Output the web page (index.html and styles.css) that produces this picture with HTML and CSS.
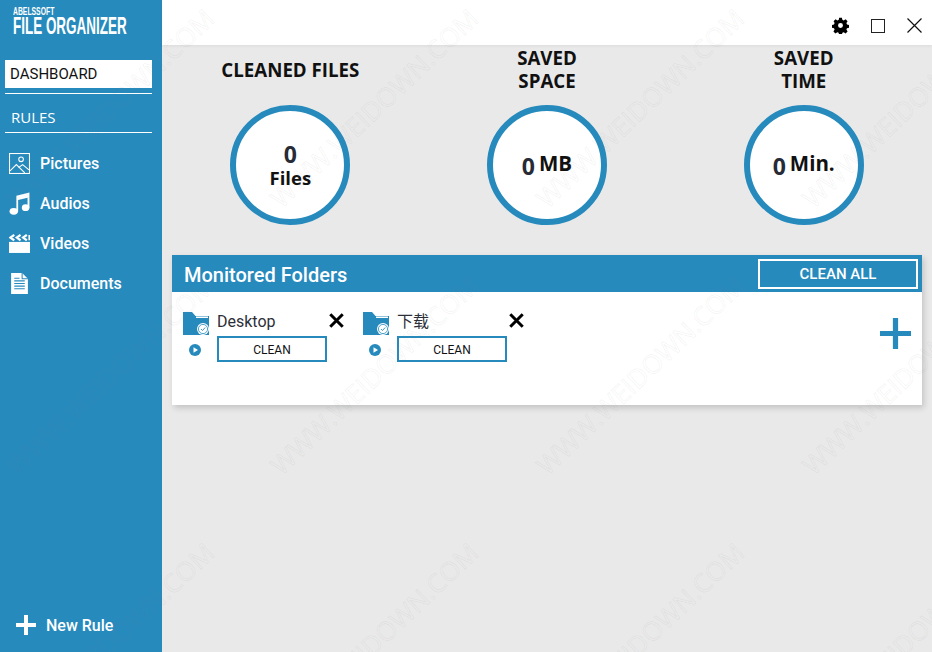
FILE: index.html
```html
<!DOCTYPE html>
<html lang="en">
<head>
<meta charset="utf-8">
<title>Abelssoft File Organizer</title>
<link rel="stylesheet" href="styles.css">
</head>
<body>
<div class="app">
  <aside class="sidebar">
    <div class="logo">
      <div class="logo-small">ABELSSOFT</div>
      <div class="logo-big">FILE ORGANIZER</div>
    </div>
    <div class="dash">DASHBOARD</div>
    <div class="rule-line"></div>
    <div class="rules">RULES</div>
    <nav class="nav">
      <div class="nav-item">
        <svg class="nav-icon" viewBox="0 0 20 20"><g fill="none" stroke="#fff" stroke-width="1"><rect x="0.5" y="0.5" width="19" height="19"/><circle cx="11.5" cy="6" r="2.2"/><path d="M1 17l6-6 8 8M9 14l4-3 6 5"/></g></svg>
        <span>Pictures</span>
      </div>
      <div class="nav-item">
        <svg class="nav-icon music" viewBox="0 0 20 22"><path fill="#fff" d="M7 3.500L19.500.5v15h-1.800V5.500L8.700 7.600V19H7z"/><ellipse fill="#fff" cx="4.500" cy="18.500" rx="4" ry="3.300"/><ellipse fill="#fff" cx="15.800" cy="15" rx="3.600" ry="3.200"/></svg>
        <span>Audios</span>
      </div>
      <div class="nav-item">
        <svg class="nav-icon" viewBox="0 0 20 18"><path fill="#fff" d="M0 7.500h20V18H0z"/><path fill="none" stroke="#fff" stroke-width="2.200" d="M5 .8L1.500 3.400 5 6M11 .8L7.500 3.400 11 6M17 .8l-3.500 2.600L17 6"/><path fill="#fff" d="M18.500 1H20v5h-1.500z"/></svg>
        <span>Videos</span>
      </div>
      <div class="nav-item">
        <svg class="nav-icon doc" viewBox="0 0 16 20"><path fill="#fff" d="M0 0h10.500L16 5.500V20H0z"/><path fill="none" stroke="#278abd" stroke-width="1" d="M3 7.500h10M3 10h10M3 12.500h10M3 15h10M3 5h5M10.500 0v5.500H16"/></svg>
        <span>Documents</span>
      </div>
    </nav>
    <div class="new-rule">
      <svg class="new-plus" viewBox="0 0 20 20"><path fill="#fff" d="M8 0h4v8h8v4h-8v8H8v-8H0V8h8z"/></svg>
      <span>New Rule</span>
    </div>
  </aside>
  <main class="main">
    <header class="topbar">
      <svg class="gear" viewBox="0 0 24 24"><path fill="#000" fill-rule="evenodd" d="M10 1h4l.6 3 2 .9 2.600-1.700 2.800 2.800-1.700 2.600.9 2 3 .6v4l-3 .6-.9 2 1.700 2.600-2.800 2.800-2.600-1.700-2 .9-.6 3h-4l-.6-3-2-.9-2.600 1.700-2.800-2.800 1.700-2.600-.9-2-3-.6v-4l3-.6.9-2L2.200 6 5 3.200l2.600 1.700 2-.9zM12 8.500a3.500 3.500 0 1 0 0 7 3.500 3.500 0 0 0 0-7z"/></svg>
      <span class="maxi"></span>
      <svg class="close" viewBox="0 0 15 15"><path fill="none" stroke="#111" stroke-width="1.200" d="M.5.500l14 14M14.500.500l-14 14"/></svg>
    </header>
    <section class="stats">
      <div class="stat">
        <h2 class="stat-title">CLEANED FILES</h2>
        <div class="ring stack"><b class="num">0</b><b class="unit">Files</b></div>
      </div>
      <div class="stat">
        <h2 class="stat-title">SAVED<br>SPACE</h2>
        <div class="ring"><b class="num">0</b><b class="unit">MB</b></div>
      </div>
      <div class="stat">
        <h2 class="stat-title">SAVED<br>TIME</h2>
        <div class="ring"><b class="num">0</b><b class="unit">Min.</b></div>
      </div>
    </section>
    <section class="panel">
      <div class="panel-head">
        <h1 class="panel-title">Monitored Folders</h1>
        <div class="clean-all">CLEAN ALL</div>
      </div>
      <div class="panel-body">
        <div class="folder">
          <div class="folder-left">
            <svg class="folder-icon" viewBox="0 0 26 23"><path fill="#278abd" d="M0 0h9l3.500 4H26v19H0z"/><path fill="#fff" d="M13 4.500h12v1.500H13z"/><circle cx="20" cy="17" r="6" fill="#fff"/><circle cx="20" cy="17" r="4.600" fill="none" stroke="#278abd" stroke-width=".8"/><path fill="none" stroke="#278abd" stroke-width=".9" d="M18 17l1.500 1.500 2.700-3"/></svg>
            <svg class="play" viewBox="0 0 12 12"><circle cx="6" cy="6" r="6" fill="#278abd"/><path fill="#fff" d="M4.500 3.300L9 6l-4.500 2.700z"/></svg>
          </div>
          <div class="folder-mid">
            <div class="folder-name">Desktop</div>
            <div class="clean">CLEAN</div>
          </div>
          <svg class="remove" viewBox="0 0 14 14"><path fill="none" stroke="#000" stroke-width="2.800" d="M1.200 1.200l11.600 11.600M12.800 1.200L1.200 12.800"/></svg>
        </div>
        <div class="folder">
          <div class="folder-left">
            <svg class="folder-icon" viewBox="0 0 26 23"><path fill="#278abd" d="M0 0h9l3.500 4H26v19H0z"/><path fill="#fff" d="M13 4.500h12v1.500H13z"/><circle cx="20" cy="17" r="6" fill="#fff"/><circle cx="20" cy="17" r="4.600" fill="none" stroke="#278abd" stroke-width=".8"/><path fill="none" stroke="#278abd" stroke-width=".9" d="M18 17l1.500 1.500 2.700-3"/></svg>
            <svg class="play" viewBox="0 0 12 12"><circle cx="6" cy="6" r="6" fill="#278abd"/><path fill="#fff" d="M4.500 3.300L9 6l-4.500 2.700z"/></svg>
          </div>
          <div class="folder-mid">
            <div class="folder-name">下载</div>
            <div class="clean">CLEAN</div>
          </div>
          <svg class="remove" viewBox="0 0 14 14"><path fill="none" stroke="#000" stroke-width="2.800" d="M1.200 1.200l11.600 11.600M12.800 1.200L1.200 12.800"/></svg>
        </div>
        <svg class="add" viewBox="0 0 32 32"><path fill="#278abd" d="M13.300 0h5.400v13.300H32v5.400H18.700V32h-5.400V18.700H0v-5.400h13.300z"/></svg>
      </div>
    </section>
  </main>
  <div class="marks" aria-hidden="true">
    <span class="mark m1">WWW.WEIDOWN.COM</span><span class="mark m2">WWW.WEIDOWN.COM</span><span class="mark m3">WWW.WEIDOWN.COM</span><span class="mark m4">WWW.WEIDOWN.COM</span>
    <span class="mark m5">WWW.WEIDOWN.COM</span><span class="mark m6">WWW.WEIDOWN.COM</span><span class="mark m7">WWW.WEIDOWN.COM</span><span class="mark m8">WWW.WEIDOWN.COM</span>
    <span class="mark m9">WWW.WEIDOWN.COM</span><span class="mark m10">WWW.WEIDOWN.COM</span><span class="mark m11">WWW.WEIDOWN.COM</span><span class="mark m12">WWW.WEIDOWN.COM</span>
  </div>
</div>
</body>
</html>
```
FILE: styles.css
```css
* { box-sizing: border-box; margin: 0; padding: 0; }
html, body { width: 932px; height: 652px; overflow: hidden; }
body { font-family: Roboto, sans-serif; background: #e9e9e9; }
.app { position: relative; display: flex; width: 932px; height: 652px; overflow: hidden; }

.sidebar { width: 162px; height: 652px; flex: none; background: #278abd; color: #fff; display: flex; flex-direction: column; padding: 0 10px 0 5px; }
.logo { height: 60px; padding: 7px 0 0 8px; font-family: "Liberation Sans", sans-serif; font-weight: 700; }
.logo-small { font-size: 11px; line-height: 9px; transform: scale(.62, 1); transform-origin: 0 0; white-space: nowrap; }
.logo-big { font-size: 23px; line-height: 20px; transform: scaleX(.585); transform-origin: 0 0; white-space: nowrap; }
.dash { height: 28px; background: #fff; color: #111; font-size: 15px; line-height: 28px; padding-left: 5px; }
.rule-line { height: 1px; background: #fff; margin-top: 5px; }
.rules { height: 39px; border-bottom: 1px solid #fff; font-family: "Open Sans", sans-serif; font-size: 15px; line-height: 47px; padding-left: 6px; margin-bottom: 10px; overflow: hidden; }
.nav { display: flex; flex-direction: column; }
.nav-item { height: 40px; display: flex; align-items: center; font-size: 16px; font-weight: 500; padding-left: 4px; }
.nav-item span { margin-left: 10px; }
.nav-icon { width: 21px; height: 21px; flex: none; }
.music { height: 23px; }
.doc { padding: 0 2px; }
.new-rule { margin-top: auto; height: 54px; display: flex; align-items: center; padding: 0 0 0 11px; font-size: 16px; font-weight: 500; }
.new-plus { width: 20px; height: 20px; margin-right: 10px; }

.main { flex: 1; min-width: 0; display: flex; flex-direction: column; }
.topbar { height: 45px; background: #fff; display: flex; align-items: center; justify-content: flex-end; padding: 6px 10px 0 0; box-shadow: 0 1px 3px rgba(0,0,0,.06); }
.gear { width: 17px; height: 17px; margin-right: 22px; }
.maxi { width: 14px; height: 14px; border: 1.500px solid #222; margin-right: 22px; }
.close { width: 15px; height: 15px; }

.stats { display: flex; height: 210px; }
.stat { width: 257px; display: flex; flex-direction: column; align-items: center; }
.stat-title { height: 48px; margin: 0 0 12px; display: flex; align-items: center; justify-content: center; text-align: center; font-family: "Open Sans", sans-serif; font-size: 18.700px; font-weight: 700; line-height: 23px; color: #111; }
.ring { width: 120px; height: 120px; border-radius: 50%; background: #fff; border: 6px solid #278abd; display: flex; align-items: center; justify-content: center; gap: 4px; font-family: "Open Sans", sans-serif; color: #111; }
.num { font-size: 23px; font-weight: 700; color: #272b36; line-height: 26px; padding-top: 1px; }
.unit { font-size: 20.500px; font-weight: 700; line-height: 24px; margin-top: -5px; }
.stack { flex-direction: column; gap: 0; padding-top: 2px; }
.stack .num { padding: 0; line-height: 24px; }
.stack .unit { font-size: 18.500px; line-height: 24px; margin-top: 0; }

.panel { margin: 0 10px; height: 150px; background: #fff; box-shadow: 2px 3px 6px rgba(0,0,0,.16); }
.panel-head { height: 37px; background: #278abd; display: flex; align-items: center; justify-content: space-between; padding: 0 4px 0 12px; }
.panel-title { font-size: 20px; font-weight: 500; color: #fff; padding-top: 3px; }
.clean-all { width: 160px; height: 30px; border: 2px solid #fff; color: #fff; font-size: 15px; font-weight: 500; text-align: center; line-height: 26px; }
.panel-body { position: relative; display: flex; padding: 20px 0 0 11px; }
.folder { width: 180px; display: flex; align-items: flex-start; }
.folder-left { width: 34px; flex: none; display: flex; flex-direction: column; align-items: center; }
.folder-icon { width: 26px; height: 23px; margin-right: 8px; }
.play { width: 12px; height: 12px; margin: 9px 10px 0 0; }
.folder-mid { width: 110px; flex: none; }
.folder-name { height: 23px; margin-bottom: 1px; font-size: 16px; line-height: 20px; color: #2d2f38; font-family: Roboto, "Noto Sans CJK SC", sans-serif; }
.clean { height: 26px; border: 2px solid #278abd; text-align: center; font-size: 12px; line-height: 24px; color: #111; }
.remove { width: 15px; height: 15px; margin: 1px 0 0 2px; flex: none; }
.add { position: absolute; left: 708px; top: 26px; width: 31px; height: 31px; }

.marks { position: absolute; inset: 0; pointer-events: none; }
.mark { position: absolute; width: 300px; text-align: center; font-family: "Open Sans", sans-serif; font-size: 26px; line-height: 40px; white-space: nowrap; color: transparent; -webkit-text-stroke: 1px rgba(120,120,120,.07); transform: rotate(-43.500deg); }
.m1 { left: -40px; top: 88px; }
.m2 { left: 224px; top: 88px; }
.m3 { left: 490px; top: 88px; }
.m4 { left: 756px; top: 88px; }
.m5 { left: -40px; top: 355px; }
.m6 { left: 224px; top: 355px; }
.m7 { left: 490px; top: 355px; }
.m8 { left: 756px; top: 355px; }
.m9 { left: -40px; top: 622px; }
.m10 { left: 224px; top: 622px; }
.m11 { left: 490px; top: 622px; }
.m12 { left: 756px; top: 622px; }
```
